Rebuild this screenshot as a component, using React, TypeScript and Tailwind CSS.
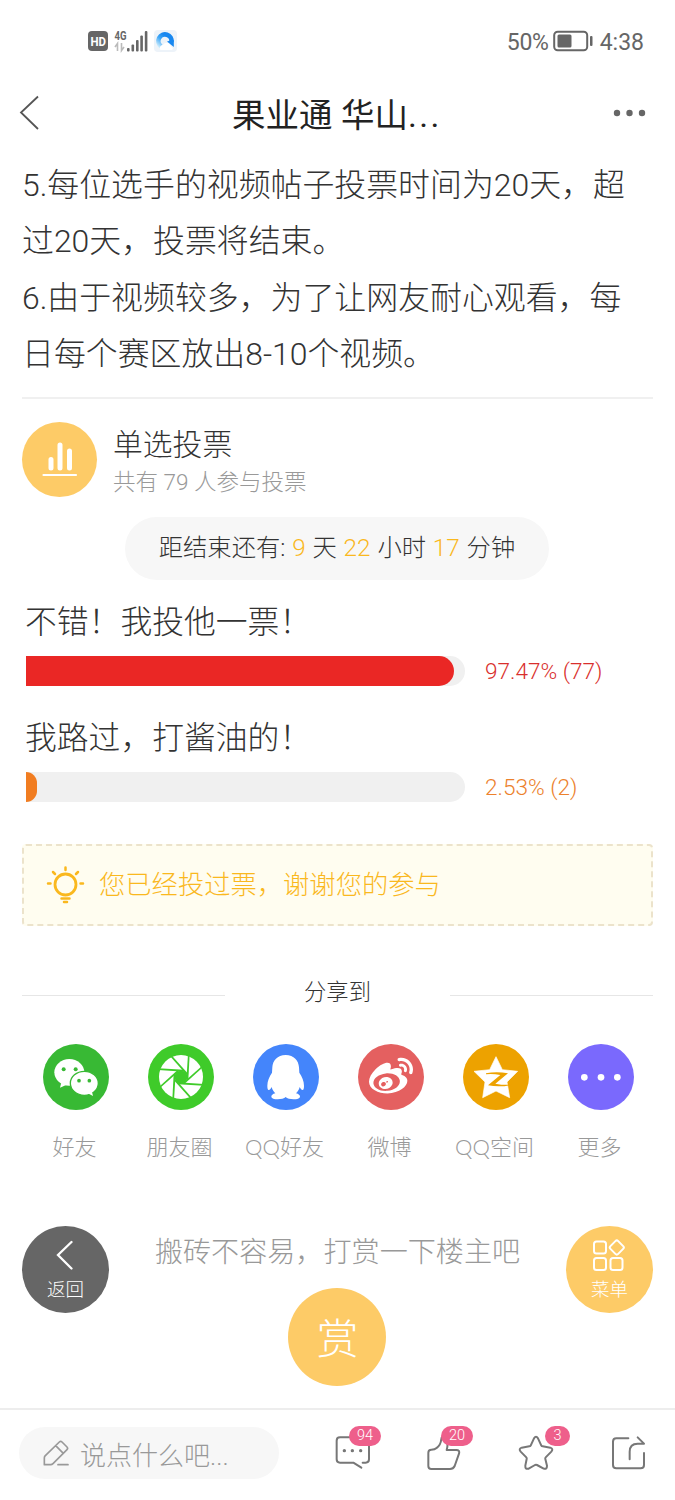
import React from 'react';
import { FaWeibo } from 'react-icons/fa';

const SignalIcons: React.FC = () => (
  <div className="flex items-center">
    <svg width="20" height="20" viewBox="0 0 20 20">
      <rect width="20" height="20" rx="4" fill="#666" />
      <text x="2.500" y="15" fontSize="13" fontWeight="700" fill="#fff" textLength="15.500" lengthAdjust="spacingAndGlyphs">HD</text>
    </svg>
    <svg width="35" height="24" viewBox="0 0 35 24" className="ml-[6px] text-[#666]" fill="currentColor">
      <text x="0.500" y="11" fontSize="13" fontWeight="700" textLength="12" lengthAdjust="spacingAndGlyphs">4G</text>
      <path d="M3.500 22V14.500L1 18M7.500 14v7.500L10 18" fill="none" stroke="#bbb" strokeWidth="1.600" />
      <rect x="13" y="19" width="2.600" height="3.500" rx="1" />
      <rect x="17.500" y="15.500" width="2.600" height="7" rx="1" />
      <rect x="22" y="11" width="2.600" height="11.500" rx="1" />
      <rect x="26.300" y="6.500" width="2.600" height="16" rx="1" />
      <rect x="30.800" y="2" width="2.600" height="20.500" rx="1" />
    </svg>
    <svg width="23" height="22" viewBox="0 0 23 22" className="ml-[5px]">
      <defs>
        <linearGradient id="ring" x1="1" y1="0" x2="0" y2="1">
          <stop offset="0.3" stopColor="#1787f0" />
          <stop offset="0.6" stopColor="#3ea6f6" />
          <stop offset="1" stopColor="#c8eafc" />
        </linearGradient>
      </defs>
      <rect width="23" height="22" rx="4" fill="#edf3f9" />
      <path d="M7 16.300A6.600 6.600 0 1 1 17.500 12" fill="none" stroke="url(#ring)" strokeWidth="4.600" />
      <path d="M13 11.500Q16 10 19.800 10V17z" fill="#1787f0" />
      <path d="M6 19.500Q5 15.500 9 15Q11 11.500 15 13.500L19 18.500Q18.500 20 17 20H7z" fill="#fff" />
    </svg>
  </div>
);

const StatusBar: React.FC = () => (
  <div className="flex h-[82px] items-center justify-between pr-[31px] pl-[88px]">
    <SignalIcons />
    <div className="flex items-center text-[23px] leading-none font-normal text-[#666]">
      <span className="pt-[2px] tracking-[-0.3px]">50%</span>
      <svg width="42" height="22" viewBox="0 0 42 22" className="mr-[5px] ml-[4px]">
        <rect x="1.200" y="1.700" width="33" height="18.600" rx="3.500" fill="none" stroke="#666" strokeWidth="2" />
        <rect x="4.500" y="4.500" width="14" height="13" rx="1.500" fill="#666" />
        <rect x="37" y="6" width="2.500" height="10" rx="1" fill="#666" />
      </svg>
      <span className="pt-[2px]">4:38</span>
    </div>
  </div>
);

const NavBar: React.FC = () => (
  <div className="flex h-[62px] items-center justify-between pr-[28px] pl-[18px]">
    <svg width="32" height="36" viewBox="0 0 32 36" fill="none" stroke="#555" strokeWidth="1.800">
      <path d="M20 1.500L3 17.500L20 34" />
    </svg>
    <h1 className="pt-[6px] pl-[11px] text-[33.500px] leading-none font-normal text-[#222]">
      果业通 华山<span className="tracking-[2.500px]">...</span>
    </h1>
    <svg width="34" height="8" viewBox="0 0 34 8" fill="#666">
      <circle cx="4" cy="4" r="3.200" />
      <circle cx="16.500" cy="4" r="3.200" />
      <circle cx="29" cy="4" r="3.200" />
    </svg>
  </div>
);

interface OptionProps {
  label: string;
  percent: number;
  votes: number;
  bar: string;
  text: string;
}

const VoteOption: React.FC<OptionProps> = ({ label, percent, votes, bar, text }) => (
  <div className="h-[116px] pl-[4px]">
    <div className="-ml-[1px] h-[50px] text-[31.800px] leading-[50px]">{label}</div>
    <div className="mt-[9px] flex h-[30px] items-center">
      <div className="h-[30px] w-[439px] overflow-hidden rounded-r-[15px] bg-[#f0f0f0]">
        <div className={`h-full rounded-r-[15px] ${bar}`} style={{ width: `${percent}%` }} />
      </div>
      <span className={`ml-[20px] pt-[2px] text-[22.600px] leading-[30px] ${text}`}>
        {percent}% ({votes})
      </span>
    </div>
  </div>
);

const WechatIcon = () => (
  <svg viewBox="0 0 198 198" className="size-[66px]">
    <circle cx="99" cy="99" r="99" fill="#38b934" />
    <g fill="#fff">
      <ellipse cx="79" cy="85" rx="45" ry="40" />
      <path d="M56 112L51 131L76 120z" />
      <ellipse cx="124" cy="118" rx="42" ry="36" stroke="#38b934" strokeWidth="4" />
      <path d="M133 147L150 156L146 140z" />
    </g>
    <g fill="#38b934">
      <circle cx="62" cy="76" r="6" />
      <circle cx="98" cy="76" r="6" />
      <circle cx="108" cy="110" r="5.500" />
      <circle cx="139" cy="110" r="5.500" />
    </g>
  </svg>
);

const MomentsIcon = () => (
  <svg viewBox="0 0 198 198" className="size-[66px]">
    <circle cx="99" cy="99" r="99" fill="#3fcb2a" />
    <circle cx="99" cy="99" r="66" fill="#fff" />
    <g transform="translate(99 99)" fill="#3fcb2a">
      <circle r="19" />
      {[0, 45, 90, 135, 180, 225, 270, 315].map((angle) => (
        <path key={angle} d="M21 -68H26L22 9H16z" transform={`rotate(${angle})`} />
      ))}
    </g>
  </svg>
);

const QQIcon = () => (
  <svg viewBox="0 0 198 198" className="size-[66px]">
    <circle cx="99" cy="99" r="99" fill="#4485fb" />
    <path
      d="M98 33C73 33 59 50 58 70L57 86C49 98 43 110 43 125C43 132 44 138 47 138C51 138 54 132 56 129C58 137 62 143 67 148C59 150 55 154 55 158C55 168 90 168 98 159C106 168 141 168 141 158C141 154 137 150 129 148C134 143 138 137 140 129C142 132 145 138 149 138C152 138 153 132 153 125C153 110 147 98 139 86L138 70C137 50 123 33 98 33z"
      fill="#fff"
    />
  </svg>
);

const WeiboIcon = () => (
  <div className="flex size-[66px] items-center justify-center rounded-full bg-[#e46060]">
    <FaWeibo size={44} color="#fff" />
  </div>
);

const QzoneIcon = () => (
  <svg viewBox="0 0 198 198" className="size-[66px]">
    <circle cx="99" cy="99" r="99" fill="#eda200" />
    <path
      d="M99 38L118 77L164 82L132 114L140 161L99 141L59 161L66 114L33 82L80 77z"
      fill="#fff"
      stroke="#fff"
      strokeWidth="2"
      strokeLinejoin="round"
    />
    <path d="M69 88Q100 81 135 88L97 119Q122 124 147 122Q112 131 75 124L112 93Q90 89 69 91z" fill="#eda200" />
  </svg>
);

const MoreIcon = () => (
  <svg viewBox="0 0 198 198" className="size-[66px]">
    <circle cx="99" cy="99" r="99" fill="#7a69fd" />
    <g fill="#fff">
      <circle cx="49" cy="100" r="10" />
      <circle cx="99" cy="100" r="10" />
      <circle cx="148" cy="100" r="10" />
    </g>
  </svg>
);

const shares = [
  { label: '好友', Icon: WechatIcon },
  { label: '朋友圈', Icon: MomentsIcon },
  { label: 'QQ好友', Icon: QQIcon },
  { label: '微博', Icon: WeiboIcon },
  { label: 'QQ空间', Icon: QzoneIcon },
  { label: '更多', Icon: MoreIcon },
];

const Badge: React.FC<{ children: React.ReactNode; className: string }> = ({ children, className }) => (
  <span
    className={`absolute -top-[9px] flex h-5 items-center justify-center rounded-full bg-[#ee5f8b] text-[14.500px] leading-none text-white ${className}`}
  >
    {children}
  </span>
);

const BottomBar: React.FC = () => (
  <footer className="flex h-[92px] items-start border-t-2 border-[#ededed] pl-[19px]">
    <div className="mt-[17px] flex h-[52px] w-[260px] items-center rounded-full bg-[#f7f7f7] pl-[24px] text-[#999]">
      <svg width="26" height="28" viewBox="0 0 78 84" fill="none" stroke="#999" strokeWidth="5" strokeLinejoin="round" strokeLinecap="round">
        <path d="M4 77V57Q4 53 7 50L49 9Q53 5 57 9L72 24Q76 28 72 32L30 74Q27 77 23 77zM38 20L61 43M45 77H75" />
      </svg>
      <span className="ml-[11px] pt-[6px] text-[26px] leading-none">
        说点什么吧...
      </span>
    </div>
    <div className="mt-[25px] ml-[56px] flex gap-[56px]">
      <div className="relative size-9">
        <svg viewBox="0 0 108 108" fill="none" stroke="#777" strokeWidth="6" strokeLinecap="round" strokeLinejoin="round">
          <path d="M83 83H92Q102 83 102 73V17Q102 7 92 7H15Q5 7 5 17V73Q5 83 15 83H55L79 98" />
          <path d="M28 47h.1M52 47h.1M77 47h.1" strokeWidth="10" />
        </svg>
        <Badge className="left-[14px] w-[32px]">94</Badge>
      </div>
      <div className="relative -left-[1px] size-9">
        <svg viewBox="0 0 108 108" fill="none" stroke="#777" strokeWidth="6" strokeLinecap="round" strokeLinejoin="round">
          <path d="M46 12Q44 30 33 38Q26 44 16 44Q7 44 7 53V93Q7 102 16 102H72Q82 102 86 93L99 56Q102 45 91 45H62Q66 31 64 15Q60 2 50 5Q46 7 46 12z" />
        </svg>
        <Badge className="left-[15px] w-[32px]">20</Badge>
      </div>
      <div className="relative -left-[1px] size-9">
        <svg viewBox="0 0 108 108" fill="none" stroke="#777" strokeWidth="6" strokeLinejoin="round">
          <path d="M48 10Q54 1 60 10L70 32Q71 34 74 34L97 38Q107 41 100 50L83 67Q81 69 82 72L87 92Q87 104 77 101L57 90Q54 89 51 90L32 101Q21 104 22 92L26 72Q27 69 25 67L8 50Q1 41 11 38L34 34Q37 34 38 32z" />
        </svg>
        <Badge className="left-[27px] w-[25px]">3</Badge>
      </div>
      <div className="size-9">
        <svg viewBox="0 0 108 108" fill="none" stroke="#777" strokeWidth="6" strokeLinecap="round" strokeLinejoin="round">
          <path d="M52 10H16Q6 10 6 20V90Q6 100 16 100H89Q99 100 99 90V54" />
          <path d="M56 73V50Q56 26 80 26H99L80 7" />
        </svg>
      </div>
    </div>
  </footer>
);

const App: React.FC = () => {
  return (
    <div className="h-[1500px] w-[675px] overflow-hidden bg-white font-[Roboto,'Noto_Sans_CJK_SC',sans-serif] font-light text-[#333]">
      <StatusBar />
      <NavBar />

      <main className="h-[1264px] px-[22px]">
        <div className="pt-[13px] text-[31.900px] leading-[56.250px] whitespace-nowrap">
          <p>5.每位选手的视频帖子投票时间为20天，超</p>
          <p>过20天，投票将结束。</p>
          <p>6.由于视频较多，为了让网友耐心观看，每</p>
          <p>日每个赛区放出8-10个视频。</p>
        </div>

        <div className="mt-[15px] h-[2px] bg-[#f0f0f0]" />

        {/* Poll header */}
        <div className="mt-[23px] flex h-[75px] items-center">
          <div className="size-[75px] rounded-full bg-[#fdcb67]">
            <svg viewBox="0 0 75 75" fill="none" stroke="#fff" strokeLinecap="round">
              <path d="M29 37.500V46M38 23V46M47.500 29V46" strokeWidth="5" />
              <path d="M21.500 53H54" strokeWidth="2.200" />
            </svg>
          </div>
          <div className="ml-[16px] pt-[5px]">
            <div className="text-[29.800px] leading-[40px]">单选投票</div>
            <div className="text-[22.500px] leading-[35px] text-[#999]">共有 79 人参与投票</div>
          </div>
        </div>

        <div className="mt-5 ml-[103px] flex h-[63px] w-[424px] justify-center rounded-full bg-[#f7f7f7] text-[24.300px] leading-[61px] [word-spacing:0.9px] whitespace-pre">
          距结束还有: <span className="text-[#fab81e]">9</span> 天 <span className="text-[#fab81e]">22</span> 小时{' '}
          <span className="text-[#fab81e]">17</span> 分钟
        </div>

        <div className="mt-[17px]">
          <VoteOption label="不错！我投他一票！" percent={97.47} votes={77} bar="bg-[#ea2725]" text="text-[#d92f2d]" />
          <VoteOption label="我路过，打酱油的！" percent={2.53} votes={2} bar="bg-[#f17d21]" text="text-[#ec812c]" />
        </div>

        <div className="mt-[15px] flex h-[82px] w-[631px] items-center rounded-[4px] border-2 border-dashed border-[#ece3cb] bg-[#fffdf0] pl-[22px] text-[26.300px] text-[#fab81e]">
          <svg width="40" height="40" viewBox="0 0 40 40" fill="none" stroke="#fab81e" strokeWidth="2.500" strokeLinecap="round">
            <circle cx="19.500" cy="19.500" r="10.500" strokeWidth="2.800" />
            <path d="M19.500 2.500V5M7 7L9 9M32 7L30 9M2 18.500H4.500M34.500 18.500H37M15.500 33.500H23.500M18 37H21" />
          </svg>
          <span className="ml-[13px] leading-none">您已经投过票，谢谢您的参与</span>
        </div>

        {/* Share */}
        <div className="mt-[49px] flex h-[40px] items-center justify-between">
          <div className="h-px w-[203px] bg-[#e6e6e6]" />
          <span className="-mt-[6px] text-[22.300px] leading-none">分享到</span>
          <div className="h-px w-[203px] bg-[#e6e6e6]" />
        </div>
        <div className="mt-[29px] ml-[1px] grid w-[630px] grid-cols-6">
          {shares.map(({ label, Icon }) => (
            <div key={label} className="flex flex-col items-center">
              <Icon />
              <span className="mt-[21px] -ml-[2px] font-[Lato,'Noto_Sans_CJK_SC',sans-serif] text-[22px] leading-[32px] text-[#999]">
                {label}
              </span>
            </div>
          ))}
        </div>

        {/* Reward */}
        <div className="mt-[63px] flex w-[631px] justify-between">
          <button className="flex size-[87px] flex-col items-center rounded-full bg-[#666] text-white">
            <svg width="20" height="30" viewBox="0 0 20 30" className="mt-[14px]" fill="none" stroke="#fff" strokeWidth="2.300" strokeLinecap="round">
              <path d="M15.500 2L2 15L15.500 28.500" />
            </svg>
            <span className="mt-[9px] text-[18.500px] leading-[22px]">返回</span>
          </button>
          <div className="flex flex-col items-center">
            <p className="h-[62px] text-[28.100px] leading-[54px] text-[#999]">搬砖不容易，打赏一下楼主吧</p>
            <button className="flex size-[98px] items-center justify-center rounded-full bg-[#fdcb67] pt-[5px] text-[42px] leading-none text-white">
              赏
            </button>
          </div>
          <button className="flex size-[87px] flex-col items-center rounded-full bg-[#fdcb67] text-white">
            <svg width="34" height="34" viewBox="0 0 34 34" className="mt-[13px]" fill="none" stroke="#fff" strokeWidth="2" strokeLinejoin="round">
              <rect x="2" y="2.500" width="12" height="12" rx="2.500" />
              <rect x="2" y="19" width="12" height="12" rx="2.500" />
              <rect x="18.500" y="19" width="12" height="12" rx="2.500" />
              <rect x="19.300" y="3" width="11" height="11" rx="2" transform="rotate(45 24.800 8.500)" />
            </svg>
            <span className="mt-[6px] text-[18.500px] leading-[22px]">菜单</span>
          </button>
        </div>
      </main>

      <BottomBar />
    </div>
  );
};

export default App;
